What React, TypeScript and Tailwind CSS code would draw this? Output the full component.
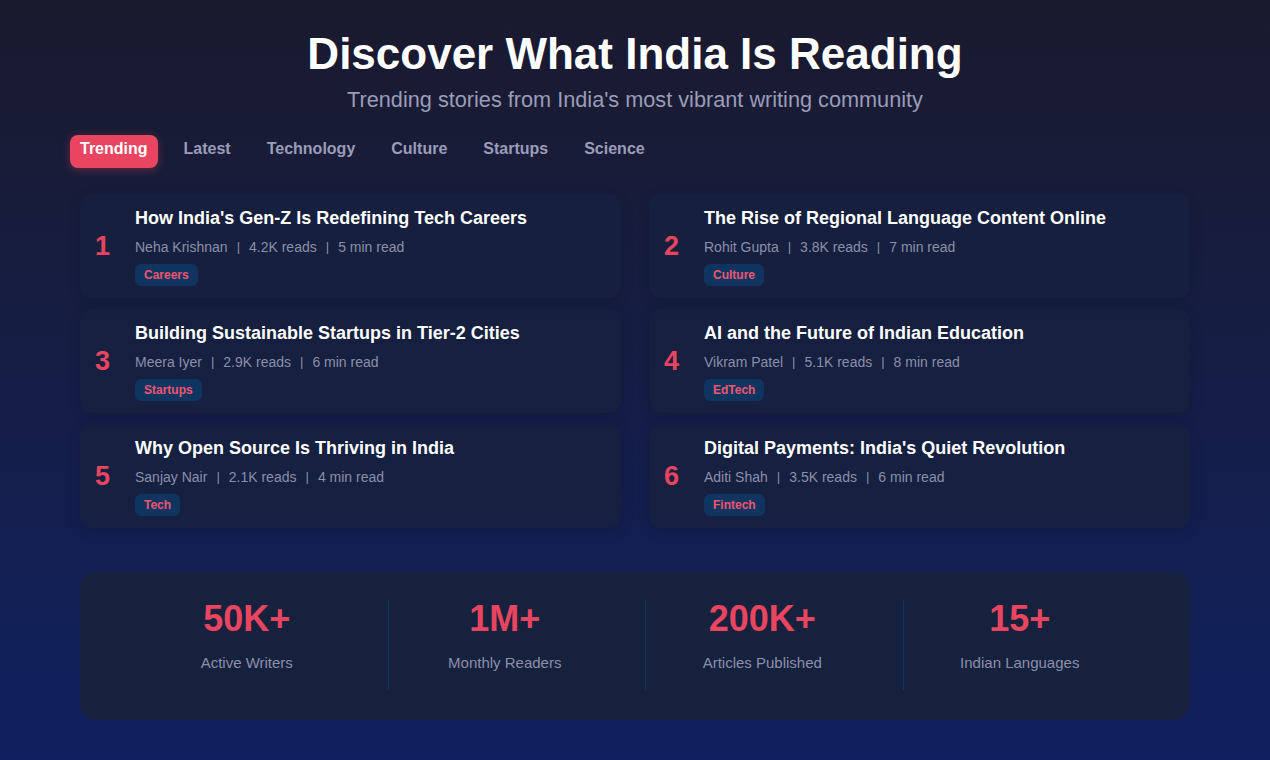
import React, { useState } from 'react';

interface Story {
  rank: number;
  title: string;
  author: string;
  reads: string;
  time: string;
  tag: string;
}

const TABS = ['Trending', 'Latest', 'Technology', 'Culture', 'Startups', 'Science'];

const STORIES: Story[] = [
  { rank: 1, title: "How India's Gen-Z Is Redefining Tech Careers", author: 'Neha Krishnan', reads: '4.2K reads', time: '5 min read', tag: 'Careers' },
  { rank: 2, title: 'The Rise of Regional Language Content Online', author: 'Rohit Gupta', reads: '3.8K reads', time: '7 min read', tag: 'Culture' },
  { rank: 3, title: 'Building Sustainable Startups in Tier-2 Cities', author: 'Meera Iyer', reads: '2.9K reads', time: '6 min read', tag: 'Startups' },
  { rank: 4, title: 'AI and the Future of Indian Education', author: 'Vikram Patel', reads: '5.1K reads', time: '8 min read', tag: 'EdTech' },
  { rank: 5, title: 'Why Open Source Is Thriving in India', author: 'Sanjay Nair', reads: '2.1K reads', time: '4 min read', tag: 'Tech' },
  { rank: 6, title: "Digital Payments: India's Quiet Revolution", author: 'Aditi Shah', reads: '3.5K reads', time: '6 min read', tag: 'Fintech' },
];

const STATS = [
  { value: '50K+', label: 'Active Writers' },
  { value: '1M+', label: 'Monthly Readers' },
  { value: '200K+', label: 'Articles Published' },
  { value: '15+', label: 'Indian Languages' },
];

const StoryCard: React.FC<{ story: Story }> = ({ story }) => (
  <div className="flex items-center rounded-xl bg-[#16213e]/80 pl-[15px] pr-4 pt-[13px] pb-3 shadow-[0_4px_14px_rgba(0,0,0,0.12)]">
    <div className="w-[24px] shrink-0 text-[27px] font-bold leading-none text-[#e94560]">{story.rank}</div>
    <div className="ml-4 flex flex-col items-start">
      <h3 className="text-[18px] font-bold leading-[22px] text-white">{story.title}</h3>
      <div className="mt-[8px] flex items-center text-[14px] leading-[20px] text-[#8b8fa8]">
        <span>{story.author}</span>
        <span className="mx-[9px] text-[13px]">|</span>
        <span>{story.reads}</span>
        <span className="mx-[9px] text-[13px]">|</span>
        <span>{story.time}</span>
      </div>
      <span className="mt-[7px] rounded-md bg-[#0f3460] px-[9px] text-[12px] font-bold leading-[22px] text-[#f0566f]">{story.tag}</span>
    </div>
  </div>
);

export default function App() {
  const [active, setActive] = useState('Trending');

  return (
    <div className="min-h-screen w-full bg-gradient-to-b from-[#1a1a2e] to-[#0f1f5f] font-['Liberation_Sans',Arial,sans-serif]">
      <div className="mx-auto w-[1110px] pt-[27px] pb-10">
        <h1 className="text-center text-[44px] font-bold leading-[54px] text-white">Discover What India Is Reading</h1>
        <p className="mt-[5px] text-center text-[21.7px] leading-[28px] text-[#9a9cb8]">Trending stories from India's most vibrant writing community</p>

        <div className="-ml-[10px] mt-[21px] flex items-center gap-[16px]">
          {TABS.map((t) => (
            <button
              key={t}
              onClick={() => setActive(t)}
              className={
                t === active
                  ? 'rounded-lg bg-[#e94560] px-2.5 pt-[4px] pb-[10px] text-[16px] font-bold leading-[19px] text-white shadow-[0_2px_8px_rgba(233,69,96,0.35)]'
                  : 'rounded-lg px-2.5 pt-[4px] pb-[10px] text-[16px] font-bold leading-[19px] text-[#9a9cb8]'
              }
            >
              {t}
            </button>
          ))}
        </div>

        <div className="mt-[26px] grid grid-cols-2 gap-x-7 gap-y-[11px]">
          {STORIES.map((s) => (
            <StoryCard key={s.rank} story={s} />
          ))}
        </div>

        <div className="mt-[44px] rounded-2xl bg-[#16213e] pl-[50px] pr-[54px] pt-[28px] pb-[30px]">
          <div className="grid grid-cols-4 gap-6">
            {STATS.map((s, i) => (
              <div key={s.label} className={`flex flex-col items-center pb-[17px] ${i > 0 ? 'border-l border-[#0f3460]' : ''}`}>
                <div className="mt-[1px] text-[36px] font-bold leading-[36px] text-[#e94560]">{s.value}</div>
                <div className="mt-[16px] text-[15px] leading-[20px] text-[#8b8fa8]">{s.label}</div>
              </div>
            ))}
          </div>
        </div>
      </div>
    </div>
  );
}
